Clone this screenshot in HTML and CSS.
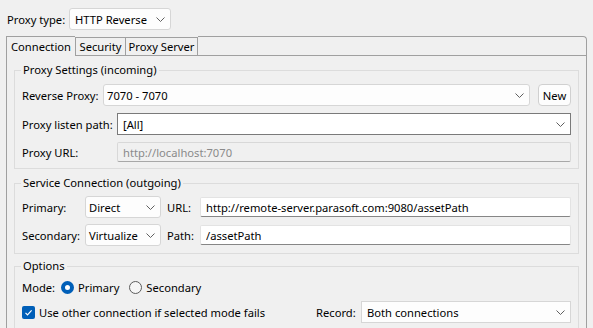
FILE: index.html
```html
<!DOCTYPE html>
<html lang="en">
<head>
    <meta charset="UTF-8">
    <title>Proxy Settings</title>
    <link rel="stylesheet" href="styles.css">
</head>
<body>
    <!-- Proxy type -->
    <div class="top-row">
        <span class="type-label">Proxy type:</span>
        <div class="combo combo-type">
            <span>HTTP Reverse</span>
            <svg class="chev" viewBox="0 0 9 5"><polyline points="0.5,0.5 4.5,4.5 8.5,0.5"/></svg>
        </div>
    </div>

    <div class="folder">
        <div class="tabs">
            <div class="tab tab-conn active">Connection</div>
            <div class="tab tab-sec">Security</div>
            <div class="tab tab-srv">Proxy Server</div>
            <div class="tab-fill"></div>
        </div>

        <div class="panel">
            <!-- Incoming -->
            <fieldset class="group group-in">
                <legend>Proxy Settings (incoming)</legend>
                <div class="rows">
                    <div class="row">
                        <span class="label w-rev">Reverse Proxy:</span>
                        <div class="combo grow pad-3">
                            <span>7070 - 7070</span>
                            <svg class="chev" viewBox="0 0 9 5"><polyline points="0.5,0.5 4.5,4.5 8.5,0.5"/></svg>
                        </div>
                        <button class="btn">New</button>
                    </div>
                    <div class="row">
                        <span class="label w-path">Proxy listen path:</span>
                        <div class="combo combo-edit grow">
                            <span>[All]</span>
                            <svg class="chev" viewBox="0 0 9 5"><polyline points="0.5,0.5 4.5,4.5 8.5,0.5"/></svg>
                        </div>
                    </div>
                    <div class="row">
                        <span class="label w-path">Proxy URL:</span>
                        <input class="field grow" type="text" value="http://localhost:7070" disabled>
                    </div>
                </div>
            </fieldset>

            <!-- Outgoing -->
            <fieldset class="group group-out">
                <legend>Service Connection (outgoing)</legend>
                <div class="rows rows-out">
                    <div class="row">
                        <span class="label w-conn">Primary:</span>
                        <div class="combo combo-mode pad-3">
                            <span>Direct</span>
                            <svg class="chev" viewBox="0 0 9 5"><polyline points="0.5,0.5 4.5,4.5 8.5,0.5"/></svg>
                        </div>
                        <span class="label w-url">URL:</span>
                        <input class="field grow" type="text" value="http://remote-server.parasoft.com:9080/assetPath">
                    </div>
                    <div class="row">
                        <span class="label w-conn">Secondary:</span>
                        <div class="combo combo-mode pad-3">
                            <span>Virtualize</span>
                            <svg class="chev" viewBox="0 0 9 5"><polyline points="0.5,0.5 4.5,4.5 8.5,0.5"/></svg>
                        </div>
                        <span class="label w-url">Path:</span>
                        <input class="field grow" type="text" value="/assetPath">
                    </div>
                </div>
            </fieldset>

            <!-- Options -->
            <fieldset class="group group-opt">
                <legend>Options</legend>
                <div class="mode-row">
                    <span class="mode-label">Mode:</span>
                    <span class="radio checked"></span>
                    <span class="opt-text">Primary</span>
                    <span class="radio"></span>
                    <span class="opt-text">Secondary</span>
                </div>
                <div class="check-row">
                    <span class="check">
                        <svg viewBox="0 0 13 13"><polyline points="3.5,6.8 5.5,8.8 9.6,4.4"/></svg>
                    </span>
                    <span class="check-text">Use other connection if selected mode fails</span>
                    <span class="record-label">Record:</span>
                    <div class="combo combo-record">
                        <span>Both connections</span>
                        <svg class="chev" viewBox="0 0 9 5"><polyline points="0.5,0.5 4.5,4.5 8.5,0.5"/></svg>
                    </div>
                </div>
            </fieldset>
        </div>
    </div>
</body>
</html>
```

FILE: styles.css
```css
body {
    margin: 0;
    height: 100vh;
    display: flex;
    flex-direction: column;
    background: #f0f0f0;
    font-family: "Noto Sans", sans-serif;
    font-size: 11.2px;
    color: #000;
    overflow: hidden;
}
.top-row {
    display: flex;
    align-items: center;
    padding: 8px 0 0 7px;
}
.type-label {
    width: 62px;
}
.combo {
    display: flex;
    align-items: center;
    justify-content: space-between;
    height: 22px;
    box-sizing: border-box;
    padding: 0 5px 0 5px;
    background: #fdfdfd;
    border: 1px solid #d6d6d6;
    border-radius: 3px;
    white-space: nowrap;
}
.combo.pad-3 {
    padding-left: 3px;
}
.combo-type {
    width: 102px;
}
.combo-edit {
    background: #fff;
    border-color: #7a7a7a;
    border-radius: 0;
}
.chev {
    width: 9px;
    height: 5px;
    flex: none;
}
.chev polyline {
    fill: none;
    stroke: #5f5f5f;
    stroke-width: 1;
}
.grow {
    flex: 1;
    min-width: 0;
}

/* tab folder */
.folder {
    flex: 1;
    min-height: 0;
    display: flex;
    flex-direction: column;
    margin: 6px 0 0 6px;
    width: 581px;
}
.tabs {
    display: flex;
    align-items: flex-end;
    height: 19px;
    flex: none;
}
.tab {
    height: 18px;
    box-sizing: border-box;
    border: 1px solid #a0a0a0;
    border-right: none;
    border-bottom: none;
    display: flex;
    align-items: center;
    justify-content: center;
    background: #f0f0f0;
}
.tab.active {
    position: relative;
    z-index: 1;
    height: 20px;
    margin-bottom: -1px;
    padding-bottom: 1px;
}
.tab-conn { width: 69px; }
.tab-sec { width: 50px; }
.tab-srv {
    width: 73px;
    border-right: 1px solid #a0a0a0;
}
.tab-fill {
    flex: 1;
    align-self: stretch;
    border-top: 1px solid #a0a0a0;
    border-right: 1px solid #a0a0a0;
    border-top-right-radius: 4px;
}
.panel {
    flex: 1;
    min-height: 0;
    overflow: hidden;
    border: 1px solid #a0a0a0;
    border-bottom: none;
    padding: 6px 7px 0;
}

/* groups */
.group {
    margin: 0;
    padding: 6px 7px 6px;
    border: 1px solid #dcdcdc;
    min-width: 0;
}
.group legend {
    padding: 0 2px;
    margin-left: -1px;
    line-height: 16px;
}
.group-out {
    margin-top: 6px;
    padding-top: 5px;
    padding-bottom: 7px;
}
.group-opt {
    margin-top: 4px;
    padding-top: 5px;
}
.rows {
    display: flex;
    flex-direction: column;
    gap: 7px;
}
.rows-out {
    gap: 6px;
}
.row {
    display: flex;
    align-items: center;
}
.label {
    flex: none;
    white-space: nowrap;
}
.w-rev { width: 81px; }
.w-path { width: 95px; }
.w-conn { width: 63px; }
.w-url {
    width: 33px;
    margin-left: 6px;
}
.btn {
    width: 33px;
    height: 22px;
    margin-left: 8px;
    padding: 0;
    font: inherit;
    color: #000;
    background: #fdfdfd;
    border: 1px solid #d0d0d0;
    border-radius: 4px;
}
.field {
    height: 20px;
    box-sizing: border-box;
    padding: 0 5px;
    font: inherit;
    color: #000;
    background: #fff;
    border: 1px solid #e3e3e3;
    border-bottom-color: #868686;
    border-radius: 2px;
    outline: none;
}
.field:disabled {
    background: #f0f0f0;
    color: #8a8a8a;
    border-color: #d8d8d8;
    border-bottom-color: #a8a8a8;
}
.combo-mode {
    width: 76px;
}

/* options */
.mode-row {
    display: flex;
    align-items: center;
    height: 16px;
}
.mode-label {
    width: 39px;
}
.radio {
    width: 13px;
    height: 13px;
    box-sizing: border-box;
    border: 1px solid #5c5c5c;
    border-radius: 50%;
    background: #f6f6f6;
    margin-right: 4px;
}
.radio.checked {
    border: 4px solid #005fb8;
    background: #fff;
}
.opt-text {
    margin-right: 10px;
}
.check-row {
    display: flex;
    align-items: center;
    margin-top: 6px;
}
.check {
    width: 13px;
    height: 13px;
    border-radius: 2px;
    background: #005fb8;
    margin-right: 4px;
}
.check svg {
    display: block;
    width: 13px;
    height: 13px;
}
.check polyline {
    fill: none;
    stroke: #fff;
    stroke-width: 1.2;
}
.record-label {
    margin-left: auto;
    width: 45px;
}
.combo-record {
    width: 210px;
    border-radius: 0;
}
```
